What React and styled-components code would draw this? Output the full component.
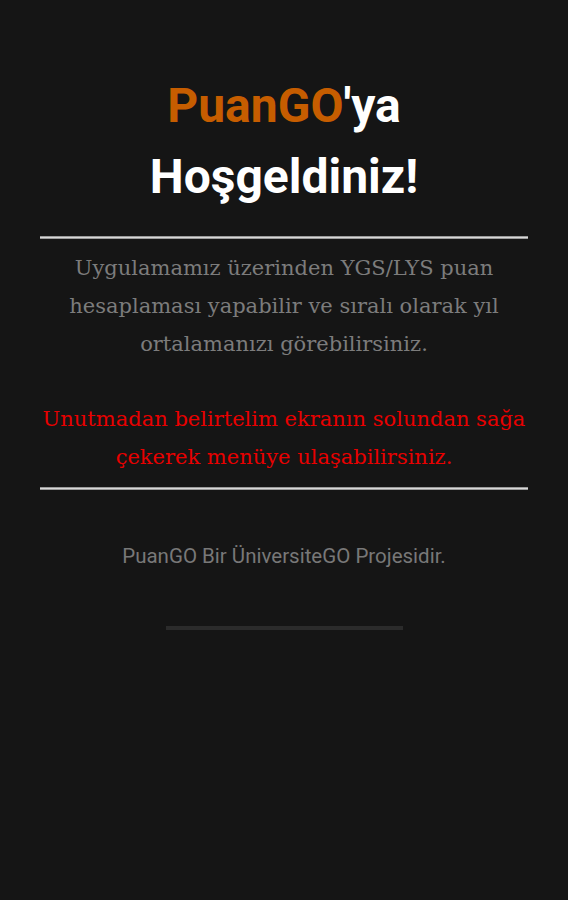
import React from "react";
import styled, { createGlobalStyle } from "styled-components";

const Global = createGlobalStyle`
  html, body { margin: 0; padding: 0; background: #151515; }
  body { width: 568px; height: 900px; overflow: hidden; }
`;

const Screen = styled.div`
  width: 568px;
  height: 900px;
  background: #151515;
  display: flex;
  flex-direction: column;
  align-items: center;
  box-sizing: border-box;
  padding: 70px 40px 0;
`;

const Title = styled.h1`
  margin: 0;
  font-family: Roboto, "Liberation Sans", sans-serif;
  font-weight: 700;
  font-size: 48px;
  line-height: 71px;
  color: #ffffff;
  text-align: center;
`;

const Brand = styled.span`
  color: #c65d00;
`;

const Divider = styled.div`
  width: 100%;
  height: 3px;
  background: #d8d8d8;
  border-top: 1px solid #9a9a9a;
  border-bottom: 1px solid #9a9a9a;
  box-sizing: border-box;
  margin-top: ${(p) => p.$top}px;
`;

const Paragraph = styled.p`
  margin: ${(p) => p.$top}px -6px 0;
  font-family: "DejaVu Serif", "Liberation Serif", serif;
  font-size: 21px;
  line-height: 38px;
  color: ${(p) => p.$color};
  text-align: center;
`;

const Footer = styled.p`
  margin: 54px 0 0;
  font-family: Roboto, "Liberation Sans", sans-serif;
  font-size: 20.5px;
  line-height: 24px;
  color: #787878;
  text-align: center;
`;

const Bar = styled.div`
  width: 237px;
  height: 4px;
  background: #2b2b2b;
  margin-top: 58px;
`;

export default function App() {
  return (
    <>
      <Global />
      <Screen>
        <Title>
          <Brand>PuanGO</Brand>'ya
          <br />
          Hoşgeldiniz!
        </Title>
        <Divider $top={24} />
        <Paragraph $top={10} $color="#7c7c7c">
          Uygulamamız üzerinden YGS/LYS puan hesaplaması yapabilir ve sıralı olarak yıl ortalamanızı görebilirsiniz.
        </Paragraph>
        <Paragraph $top={37} $color="#e80000">
          Unutmadan belirtelim ekranın solundan sağa çekerek menüye ulaşabilirsiniz.
        </Paragraph>
        <Divider $top={11} />
        <Footer>PuanGO Bir ÜniversiteGO Projesidir.</Footer>
        <Bar />
      </Screen>
    </>
  );
}
